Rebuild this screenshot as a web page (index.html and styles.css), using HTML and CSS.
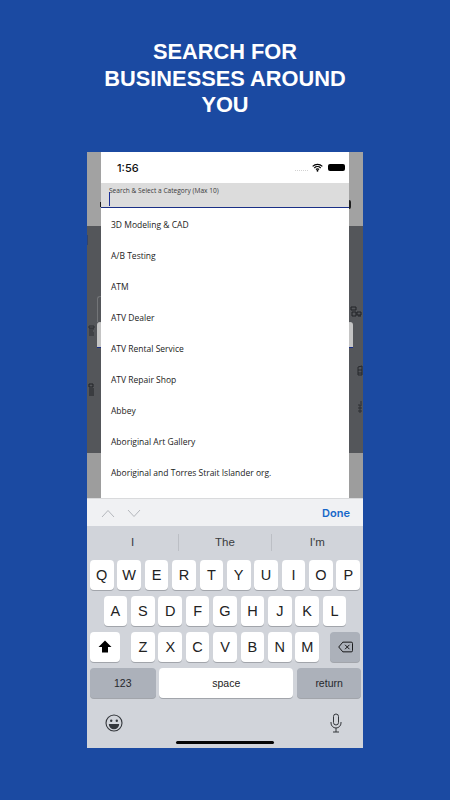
FILE: index.html
```html
<!DOCTYPE html>
<html lang="en">
<head>
<meta charset="utf-8">
<title>Search for businesses around you</title>
<link rel="stylesheet" href="styles.css">
</head>
<body>
<h1 class="headline">SEARCH FOR<br>BUSINESSES AROUND<br>YOU</h1>
<main class="phone">
  <section class="screen">
    <div class="band band-top"></div>
    <div class="band band-dark"></div>
    <div class="band band-bottom"></div>
    <div class="peek-outline"></div>
    <div class="peek peek-left"></div>
    <div class="peek peek-right"></div>
    <span class="edge edge-right"></span>
    <span class="edge edge-left"></span>
    <span class="edge edge-curve"></span>
    <svg class="scrap scrap-a" viewBox="0 0 7 11"><path d="M1 1h5v2H1zM1 4h5M1 6h4M1 8h5M1 10h5" fill="none" stroke="#2c2e32" stroke-width="1"/></svg>
    <svg class="scrap scrap-b" viewBox="0 0 7 13"><path d="M1 1h4v3H1zM1 6h5M1 8h5M1 10h5M1 12h5" fill="none" stroke="#202226" stroke-width="1"/></svg>
    <svg class="scrap scrap-c" viewBox="0 0 12 12"><path d="M1 1h5v3H1zM2 6h4v4H2zM7 6h4v3H7zM8 10h3" fill="none" stroke="#202226" stroke-width="1"/></svg>
    <svg class="scrap scrap-d" viewBox="0 0 6 12"><path d="M1 2l4-1v9H1zM1 5h4M1 8h4" fill="none" stroke="#26282c" stroke-width="1"/></svg>
    <svg class="scrap scrap-e" viewBox="0 0 6 14"><path d="M4 1v3M1 5h4M1 8h4M1 11h4M3 5v8" fill="none" stroke="#2c2e32" stroke-width="1"/></svg>
    <div class="modal">
      <div class="status">
        <span class="clock">1:56</span>
        <span class="status-icons">
          <span class="signal"></span>
          <svg class="wifi" viewBox="0 0 12 9"><path d="M.7 3.2a7.6 7.6 0 0 1 10.6 0M2.500 5a5 5 0 0 1 7 0M4.300 6.700a2.400 2.400 0 0 1 3.400 0" fill="none" stroke="#000" stroke-width="1.300"/><circle cx="6" cy="8" r="1" fill="#000"/></svg>
          <span class="battery"></span>
        </span>
      </div>
      <div class="search">
        <span class="search-label">Search &amp; Select a Category (Max 10)</span>
        <span class="caret"></span>
      </div>
      <ul class="list">
        <li>3D Modeling &amp; CAD</li>
        <li>A/B Testing</li>
        <li>ATM</li>
        <li>ATV Dealer</li>
        <li>ATV Rental Service</li>
        <li>ATV Repair Shop</li>
        <li>Abbey</li>
        <li>Aboriginal Art Gallery</li>
        <li>Aboriginal and Torres Strait Islander org.</li>
      </ul>
    </div>
  </section>
  <section class="toolbar">
    <svg class="chevrons" viewBox="0 0 40 10"><path d="M1 9l6-6.500 6 6.500M27 2l6 6.500 6-6.500" fill="none" stroke="#b4b7bc" stroke-width="1"/></svg>
    <span class="done">Done</span>
  </section>
  <section class="keyboard">
    <div class="suggestions">
      <span class="suggestion">I</span>
      <span class="suggestion">The</span>
      <span class="suggestion">I'm</span>
    </div>
    <div class="keys">
      <div class="row">
        <span class="key">Q</span><span class="key">W</span><span class="key">E</span><span class="key">R</span><span class="key">T</span><span class="key">Y</span><span class="key">U</span><span class="key">I</span><span class="key">O</span><span class="key">P</span>
      </div>
      <div class="row">
        <span class="key">A</span><span class="key">S</span><span class="key">D</span><span class="key">F</span><span class="key">G</span><span class="key">H</span><span class="key">J</span><span class="key">K</span><span class="key">L</span>
      </div>
      <div class="row row-split">
        <span class="key key-shift"><svg class="shift" viewBox="0 0 14 13"><path d="M7 .5L13.500 7H10v5.500H4V7H.5z" fill="#000"/></svg></span>
        <span class="letters"><span class="key">Z</span><span class="key">X</span><span class="key">C</span><span class="key">V</span><span class="key">B</span><span class="key">N</span><span class="key">M</span></span>
        <span class="key key-fn key-back"><svg class="back" viewBox="0 0 17 13"><path d="M5.500 1H15a1.500 1.500 0 0 1 1.500 1.500v8A1.500 1.500 0 0 1 15 12H5.500L.8 6.500zM8 4l5 5M13 4l-5 5" fill="none" stroke="#000" stroke-width="1"/></svg></span>
      </div>
      <div class="row row-bottom">
        <span class="key key-fn key-num">123</span>
        <span class="key key-space">space</span>
        <span class="key key-fn key-return">return</span>
      </div>
    </div>
    <div class="kb-foot">
      <svg class="emoji" viewBox="0 0 18 18"><circle cx="9" cy="9" r="8" fill="none" stroke="#33363b" stroke-width="1.100"/><circle cx="6.200" cy="6.800" r="1.200" fill="#33363b"/><circle cx="11.800" cy="6.800" r="1.200" fill="#33363b"/><path d="M3.800 10h10.400a5.200 5.200 0 0 1-10.400 0z" fill="#33363b"/></svg>
      <svg class="mic" viewBox="0 0 12 20"><rect x="3.500" y="1" width="5" height="11" rx="2.500" fill="none" stroke="#33363b"/><path d="M1 9v1a5 5 0 0 0 10 0V9M6 15v4M3 19h6" fill="none" stroke="#33363b"/></svg>
    </div>
    <div class="home-bar"></div>
  </section>
</main>
</body>
</html>
```

FILE: styles.css
```css
* { box-sizing: border-box; }
html, body { height: 100%; }
body {
  margin: 0;
  width: 450px;
  height: 800px;
  overflow: hidden;
  background: #1b4aa2;
  font-family: "Liberation Sans", Arial, sans-serif;
  padding-top: 39px;
}
.headline {
  margin: 0;
  height: 113px;
  color: #fff;
  font-size: 21.800px;
  line-height: 26.500px;
  font-weight: 700;
  text-align: center;
}
.phone {
  width: 276px;
  height: 596px;
  margin-left: 87px;
  display: flex;
  flex-direction: column;
}
.screen {
  position: relative;
  height: 346px;
  display: flex;
  flex-direction: column;
  overflow: hidden;
}
.band-top { height: 74px; background: #a2a2a2; }
.band-dark { height: 227px; background: #54565a; }
.band-bottom { height: 45px; background: #9d9d9d; }
.peek {
  position: absolute;
  top: 170px;
  width: 6px;
  height: 26px;
  background: #c4c4c4;
  border-radius: 3px 3px 0 0;
  border-bottom: 1px solid #1a2f86;
}
.peek-left { left: 10px; }
.peek-right { right: 10px; }
.peek-outline {
  position: absolute;
  left: 10px;
  top: 144px;
  width: 6px;
  height: 26px;
  border-left: 1px solid #737578;
  border-top: 1px solid #737578;
  border-radius: 3px 0 0 0;
}
.edge { position: absolute; display: block; background: #1e1e1e; }
.edge-right { left: 262px; top: 48px; width: 1.500px; height: 9px; border-radius: 0 3px 3px 0; }
.edge-left { left: 13px; top: 50px; width: 1px; height: 5px; }
.edge-curve { left: 0; top: 83px; width: 1px; height: 10px; background: #33436a; }
.scrap { position: absolute; display: block; }
.scrap-a { left: 1px; top: 173px; width: 7px; height: 11px; }
.scrap-b { left: 1px; top: 231px; width: 7px; height: 13px; }
.scrap-c { left: 263px; top: 154px; width: 12px; height: 12px; }
.scrap-d { left: 270px; top: 213px; width: 6px; height: 12px; }
.scrap-e { left: 270px; top: 248px; width: 6px; height: 14px; }
.modal {
  position: absolute;
  left: 14px;
  top: 0;
  width: 248px;
  height: 346px;
  background: #fff;
  color: #222;
  display: flex;
  flex-direction: column;
}
.status {
  height: 31px;
  flex: none;
  display: flex;
  align-items: center;
  justify-content: space-between;
  padding: 0 4px 0 16px;
}
.clock {
  font-family: Inter, "Liberation Sans", sans-serif;
  font-size: 11px;
  font-weight: 500;
  color: #111;
}
.status-icons { display: flex; align-items: center; gap: 4px; }
.signal { width: 13px; border-bottom: 1.500px dotted #d2d2d2; margin-top: 5px; }
.wifi { width: 11px; height: 9px; display: block; }
.battery {
  width: 17px;
  height: 7px;
  border-radius: 2px;
  background: #000;
  margin-left: 1px;
}
.search {
  position: relative;
  height: 25px;
  flex: none;
  background: #dcdcdc;
  border-bottom: 1px solid #1a2f86;
  padding: 3px 0 0 8px;
}
.search-label {
  display: block;
  font-family: "Open Sans", sans-serif;
  font-size: 6.600px;
  line-height: 10px;
  color: #3a3a3a;
}
.caret {
  position: absolute;
  left: 8px;
  top: 9px;
  width: 1px;
  height: 14px;
  background: #1a2f96;
}
.list {
  list-style: none;
  margin: 0;
  padding: .5px 0 0;
  font-family: "Open Sans", sans-serif;
  font-size: 8.500px;
}
.list li {
  height: 31px;
  line-height: 31px;
  padding-left: 10px;
  white-space: nowrap;
}
.toolbar {
  height: 28px;
  flex: none;
  background: #f0f1f3;
  border-top: 1px solid #d9dadc;
  display: flex;
  align-items: center;
  justify-content: space-between;
  padding: 0 13px 0 14px;
}
.chevrons { width: 40px; height: 10px; display: block; }
.done {
  color: #1667c9;
  font-size: 11px;
  font-weight: 600;
  font-family: Inter, "Liberation Sans", sans-serif;
}
.keyboard {
  position: relative;
  flex: 1;
  background: #d1d4da;
  display: flex;
  flex-direction: column;
}
.suggestions {
  height: 34px;
  flex: none;
  display: flex;
  padding-top: 8px;
}
.suggestion {
  flex: 1;
  height: 17px;
  line-height: 17px;
  text-align: center;
  font-size: 11.500px;
  color: #3a3c40;
  border-left: 1px solid #bcbfc5;
}
.suggestion:first-child { border-left: 0; }
.keys {
  display: flex;
  flex-direction: column;
  gap: 6.600px;
  padding: 0 3px;
}
.row {
  height: 29.500px;
  display: flex;
  justify-content: center;
  gap: 3.800px;
}
.key {
  width: 23.600px;
  height: 29.500px;
  background: #fff;
  border-radius: 4px;
  box-shadow: 0 1px 0 #a2a5ab;
  display: flex;
  align-items: center;
  justify-content: center;
  font-family: "Liberation Sans", sans-serif;
  font-size: 14.500px;
  color: #222;
  flex: none;
}
.row-split { justify-content: space-between; }
.letters { display: flex; gap: 3.800px; }
.key-shift { width: 30px; }
.key-back { width: 30px; }
.key-fn { background: #acb1ba; }
.shift { width: 14px; height: 13px; display: block; }
.back { width: 15px; height: 12px; display: block; }
.row-bottom { justify-content: space-between; }
.key-num {
  width: 65.500px;
  font-size: 10.500px;
  color: #26282c;
}
.key-return {
  width: 64px;
  font-size: 10.500px;
  color: #26282c;
}
.key-space {
  width: 134px;
  font-size: 10.500px;
}
.kb-foot {
  display: flex;
  justify-content: space-between;
  align-items: center;
  padding: 0 21px 0 18px;
  margin-top: 15px;
}
.emoji { width: 18px; height: 18px; display: block; }
.mic { width: 12px; height: 20px; display: block; }
.home-bar {
  position: absolute;
  left: 89px;
  bottom: 4px;
  width: 98px;
  height: 3px;
  border-radius: 2px;
  background: #050505;
}
```
